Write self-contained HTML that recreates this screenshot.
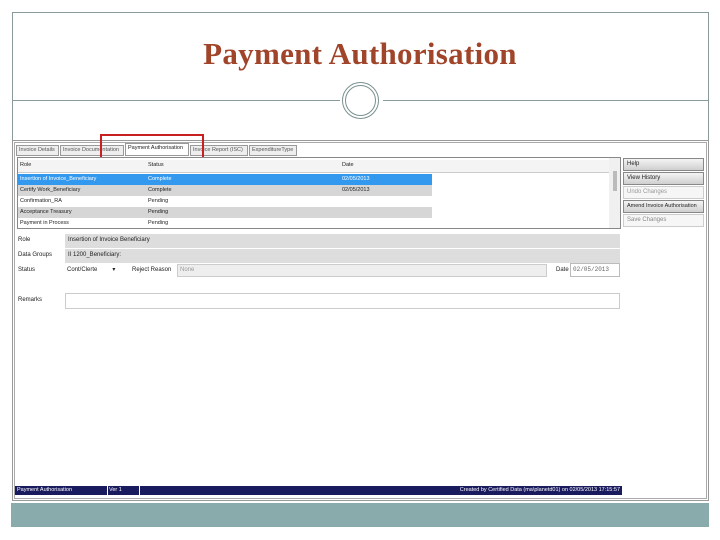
<!DOCTYPE html>
<html><head><meta charset="utf-8"><style>
*{box-sizing:border-box;margin:0;padding:0}
body{width:720px;height:540px;background:#fff;position:relative;overflow:hidden;font-family:"Liberation Sans",sans-serif;font-size:6px;color:#222}
.a{position:absolute}
.t{font-family:"Liberation Serif",serif;color:#a0442a;font-size:31px;font-weight:bold;letter-spacing:0.3px;white-space:nowrap}
.tab{position:absolute;top:145px;height:11px;border:1px solid #999;background:#eee;font-size:5.5px;line-height:9px;padding-left:2px;color:#555}
.row{position:absolute;left:18px;width:414px;height:10.5px;line-height:10px;font-size:5.5px}
.row span{position:absolute}
.btn{position:absolute;left:623px;width:81px;height:13px;border:1px solid #888;background:linear-gradient(#f4f4f4,#cfcfcf);font-size:6px;line-height:11px;padding-left:3px}
.lbl{position:absolute;left:18px;font-size:6px}
.band{position:absolute;left:65px;width:555px;background:#ddd;font-size:6px;line-height:13px;padding-left:3px}
</style></head><body>
<div class="a" style="left:12px;top:12px;width:697px;height:488px;border:1px solid #8a9a9a;border-bottom:none"></div>
<div class="a t" style="left:0;width:720px;text-align:center;top:36px">Payment Authorisation</div>
<div class="a" style="left:12px;top:100px;width:328px;height:1px;background:#8a9a9a"></div>
<div class="a" style="left:383px;top:100px;width:326px;height:1px;background:#8a9a9a"></div>
<div class="a" style="left:342px;top:82px;width:37px;height:37px;border:4px double #7a9090;border-radius:50%"></div>

<div class="a" style="left:12px;top:140px;width:697px;height:361px;border:1px solid #999"></div>
<div class="a" style="left:14px;top:142px;width:693px;height:357px;border:1px solid #aaa"></div>

<div class="tab" style="left:16px;width:43px">Invoice Details</div>
<div class="tab" style="left:60px;width:64px">Invoice Documentation</div>
<div class="tab" style="left:125px;width:64px;background:#fff;color:#222;top:143px;height:13px">Payment Authorisation</div>
<div class="tab" style="left:190px;width:58px">Invoice Report (ISC)</div>
<div class="tab" style="left:249px;width:48px">ExpenditureType</div>
<div class="a" style="left:100px;top:134px;width:104px;height:36px;border:2px solid #c82020"></div>

<div class="a" style="left:17px;top:157px;width:604px;height:72px;border:1px solid #888;background:#fff"></div>
<div class="row" style="top:160px;background:#f4f4f4;width:592px;border-bottom:1px solid #ccc;height:13px"><span style="left:2px">Role</span><span style="left:130px">Status</span><span style="left:324px">Date</span></div>
<div class="row" style="top:174px;background:#3399ee;color:#fff"><span style="left:2px">Insertion of Invoice_Beneficiary</span><span style="left:130px">Complete</span><span style="left:324px">02/05/2013</span></div>
<div class="row" style="top:185px;background:#d6d6d6"><span style="left:2px">Certify Work_Beneficiary</span><span style="left:130px">Complete</span><span style="left:324px">02/05/2013</span></div>
<div class="row" style="top:196px"><span style="left:2px">Confirmation_RA</span><span style="left:130px">Pending</span></div>
<div class="row" style="top:207px;background:#d6d6d6"><span style="left:2px">Acceptance Treasury</span><span style="left:130px">Pending</span></div>
<div class="row" style="top:218px"><span style="left:2px">Payment in Process</span><span style="left:130px">Pending</span></div>
<div class="a" style="left:609px;top:158px;width:11px;height:70px;background:#f0f0f0"></div>
<div class="a" style="left:613px;top:171px;width:4px;height:20px;background:#bbb"></div>

<div class="btn" style="top:158px">Help</div>
<div class="btn" style="top:172px">View History</div>
<div class="btn" style="top:186px;background:#f6f6f6;color:#999;border-color:#ccc">Undo Changes</div>
<div class="btn" style="top:200px;font-size:5.5px">Amend Invoice Authorisation</div>
<div class="btn" style="top:214px;background:#f6f6f6;color:#888;border-color:#ccc">Save Changes</div>

<div class="lbl" style="top:237px">Role</div>
<div class="band" style="top:234px;height:14px">Insertion of Invoice Beneficiary</div>
<div class="lbl" style="top:252px">Data Groups</div>
<div class="band" style="top:249px;height:14px">II 1200_Beneficiary:</div>
<div class="lbl" style="top:267px">Status</div>
<div class="a" style="left:65px;top:264px;width:55px;height:12px;font-size:6px;line-height:12px;padding-left:2px">Cont/Clerte &nbsp; &nbsp; &nbsp; &nbsp; ▾</div>
<div class="a" style="left:132px;top:267px;font-size:6px">Reject Reason</div>
<div class="a" style="left:177px;top:264px;width:370px;height:13px;border:1px solid #ccc;background:#eee;color:#999;font-size:6px;line-height:11px;padding-left:2px">None</div>
<div class="a" style="left:556px;top:267px;font-size:6px">Date</div>
<div class="a" style="left:570px;top:263px;width:50px;height:14px;border:1px solid #bbb;font-family:'Liberation Mono',monospace;font-size:6px;line-height:12px;padding-left:2px;color:#666">02/05/2013</div>
<div class="lbl" style="top:297px">Remarks</div>
<div class="a" style="left:65px;top:293px;width:555px;height:16px;border:1px solid #ccc"></div>

<div class="a" style="left:15px;top:486px;width:607px;height:9px;background:#1a1a5e;color:#fff;font-size:5.5px;line-height:9px">
<span class="a" style="left:2px">Payment Authorisation</span>
<span class="a" style="left:92px;top:0;height:9px;border-left:1px solid #fff"></span>
<span class="a" style="left:94px">Ver 1</span>
<span class="a" style="left:124px;top:0;height:9px;border-left:1px solid #fff"></span>
<span class="a" style="right:2px">Created by Certified Data (ma\planetd01) on 02/05/2013 17:15:57</span>
</div>

<div class="a" style="left:11px;top:503px;width:698px;height:24px;background:#8aabab"></div>
</body></html>
